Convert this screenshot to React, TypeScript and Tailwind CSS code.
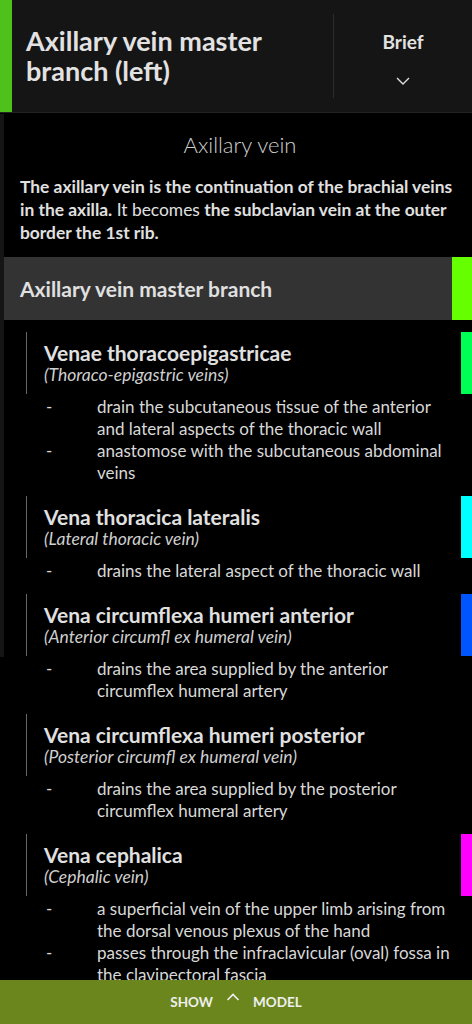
import React from "react";

type Vein = {
  name: string;
  latin: string;
  color: string;
  points: string[];
};

const veins: Vein[] = [
  {
    name: "Venae thoracoepigastricae",
    latin: "(Thoraco-epigastric veins)",
    color: "bg-[#00ff55]",
    points: [
      "drain the subcutaneous tissue of the anterior and lateral aspects of the thoracic wall",
      "anastomose with the subcutaneous abdominal veins",
    ],
  },
  {
    name: "Vena thoracica lateralis",
    latin: "(Lateral thoracic vein)",
    color: "bg-[#00ffff]",
    points: ["drains the lateral aspect of the thoracic wall"],
  },
  {
    name: "Vena circumflexa humeri anterior",
    latin: "(Anterior circumfl ex humeral vein)",
    color: "bg-[#0055ff]",
    points: ["drains the area supplied by the anterior circumflex humeral artery"],
  },
  {
    name: "Vena circumflexa humeri posterior",
    latin: "(Posterior circumfl ex humeral vein)",
    color: "",
    points: ["drains the area supplied by the posterior circumflex humeral artery"],
  },
  {
    name: "Vena cephalica",
    latin: "(Cephalic vein)",
    color: "bg-[#ff00ff]",
    points: [
      "a superficial vein of the upper limb arising from the dorsal venous plexus of the hand",
      "passes through the infraclavicular (oval) fossa in the clavipectoral fascia",
    ],
  },
];

function VeinItem({ vein }: { vein: Vein }) {
  return (
    <div className="pb-[12px]">
      <div className="flex">
        <div className="ml-[26px] w-px bg-[#666]" />
        <div className="flex-1 pl-[17px] pt-[10px] pb-[8px]">
          <h3 className="text-[21px] font-bold leading-[22px] text-[#e0e0e0]">
            {vein.name}
          </h3>
          <p className="text-[17.5px] italic leading-[22px] text-[#cfcfcf]">
            {vein.latin}
          </p>
        </div>
        <div className={`w-[11px] ${vein.color}`} />
      </div>
      <ul className="mt-[2px] pr-[12px]">
        {vein.points.map((p, i) => (
          <li key={i} className="flex text-[17px] leading-[22px] text-[#d8d8d8]">
            <span className="w-[97px] pl-[46px] shrink-0">-</span>
            <span className="flex-1">{p}</span>
          </li>
        ))}
      </ul>
    </div>
  );
}

export default function App() {
  return (
    <div
      className="relative w-[472px] h-[1024px] overflow-hidden bg-black"
      style={{ fontFamily: "Lato, 'Noto Sans', sans-serif" }}
    >
      <header className="flex h-[113px] bg-[#151515] border-b border-[#222]">
        <div className="w-[12px] bg-[#4ec21a]" />
        <div className="flex flex-1 items-center pl-[14px]">
          <h1 className="flex-1 text-[27px] font-bold leading-[30px] text-[#e2e2e2]">
            Axillary vein master
            <br />
            branch (left)
          </h1>
          <div className="w-px h-[84px] bg-[#2c2c2c]" />
          <div className="w-[138px] flex flex-col items-center pt-[2px]">
            <span className="text-[19px] font-bold text-[#e2e2e2]">Brief</span>
            <svg width="16" height="10" viewBox="0 0 16 10" className="mt-[19px]">
              <path d="M2 2l6 6 6-6" fill="none" stroke="#ddd" strokeWidth="1.4" />
            </svg>
          </div>
        </div>
      </header>

      <div className="absolute left-0 top-[114px] w-[4px] h-[543px] bg-[#151515]" />

      <section className="pt-[18px] pb-[13px] pl-[20px] pr-[12px]">
        <h2 className="text-center text-[22px] font-light leading-[28px] text-[#d0d0d0]">
          Axillary vein
        </h2>
        <p className="mt-[16px] text-[17.4px] leading-[23px] text-[#e0e0e0]">
          <b>The axillary vein is the continuation of the brachial veins in the axilla.</b>{" "}
          It becomes <b>the subclavian vein at the outer border the 1st rib.</b>
        </p>
      </section>

      <div className="flex h-[63px] bg-[#333] border-l-2 border-[#5ee600]">
        <div className="flex-1 flex items-center pl-[18px]">
          <span className="text-[21px] font-bold text-[#e0e0e0]">
            Axillary vein master branch
          </span>
        </div>
        <div className="w-[20px] bg-[#66ff00]" />
      </div>

      <div className="pt-[12px]">
        {veins.map((v) => (
          <VeinItem key={v.name} vein={v} />
        ))}
      </div>

      <footer className="absolute bottom-0 left-0 right-0 h-[44px] bg-[#6b861c] flex items-center justify-center gap-[13px] text-[13.5px] font-bold text-[#f0f0f0]">
        <span>SHOW</span>
        <svg width="14" height="10" viewBox="0 0 14 10" className="-mt-[10px]">
          <path d="M1.5 8l5.5-5.5 5.5 5.5" fill="none" stroke="#f0f0f0" strokeWidth="1.6" />
        </svg>
        <span>MODEL</span>
      </footer>
    </div>
  );
}
